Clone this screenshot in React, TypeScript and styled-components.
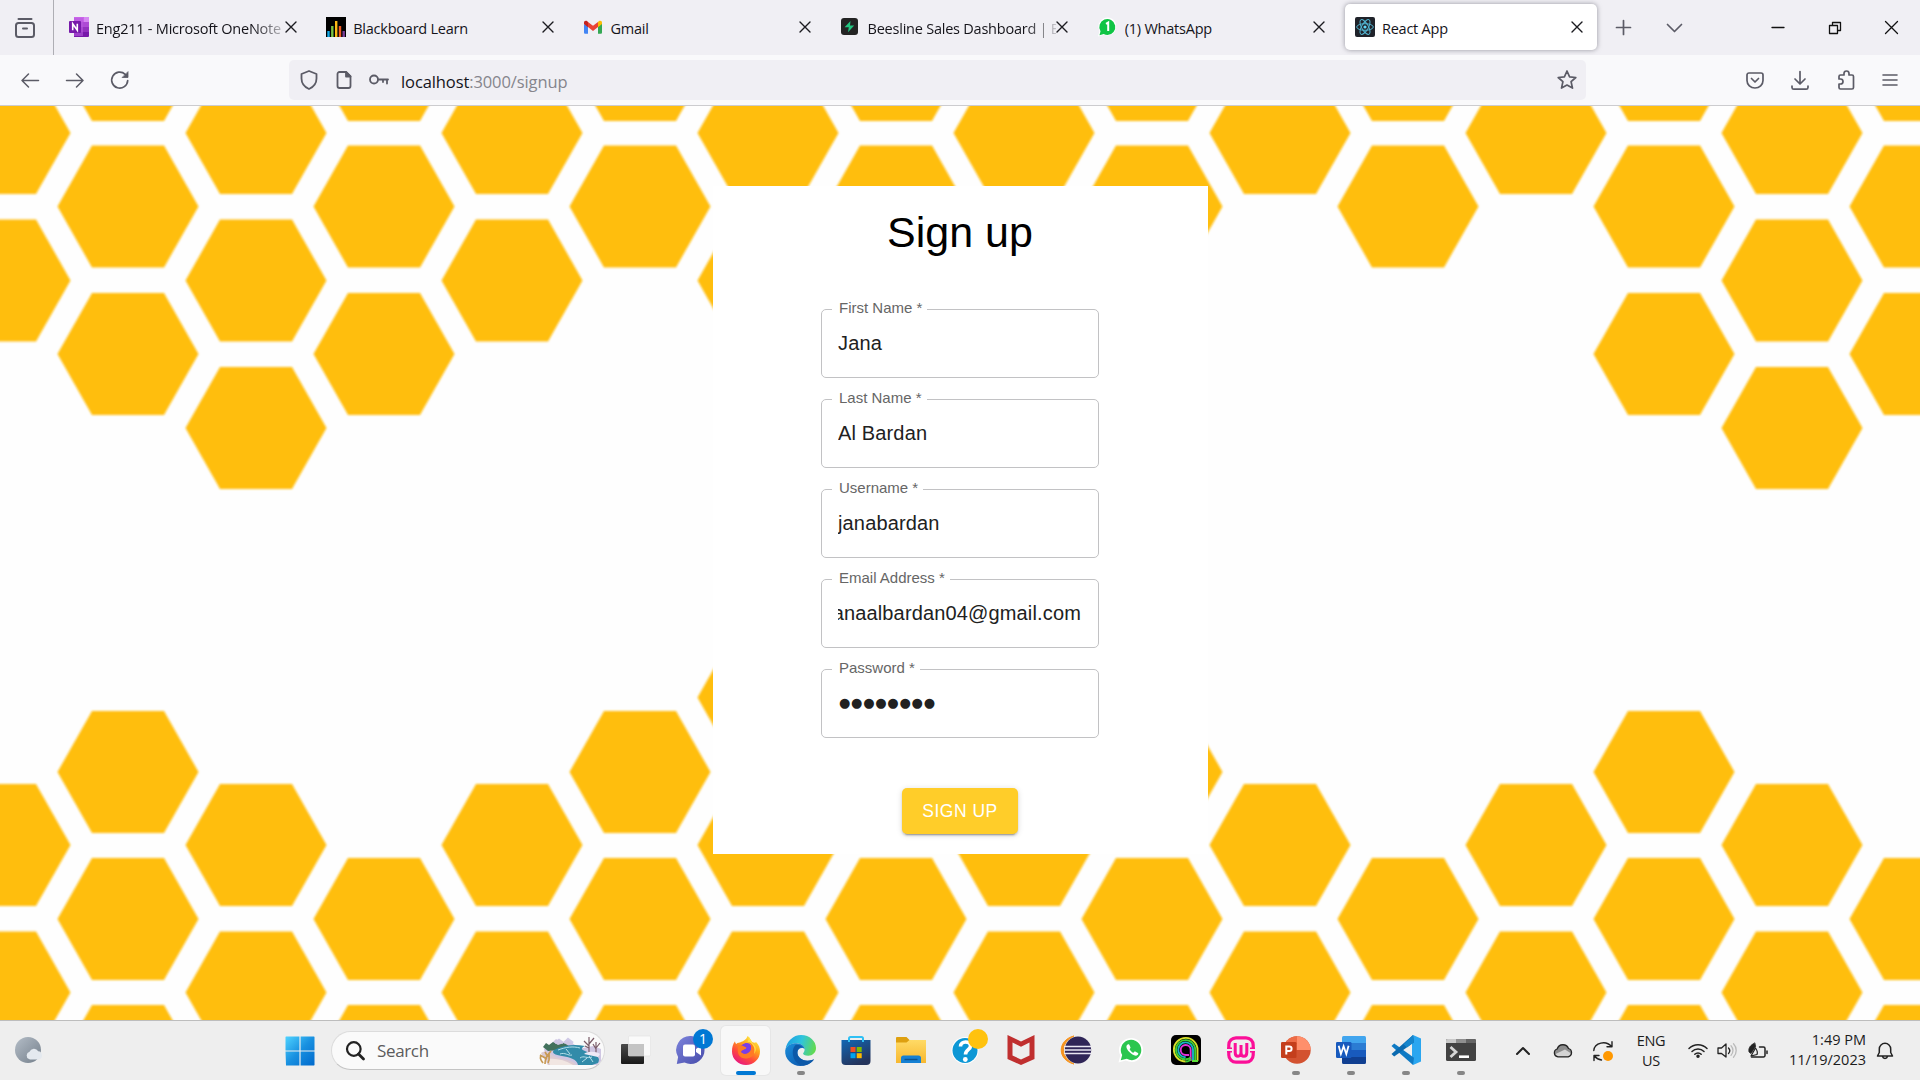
import React from "react";
import styled, { createGlobalStyle } from "styled-components";

const UI_FONT = `"Open Sans", "Noto Sans", sans-serif`;
const FORM_FONT = `"Liberation Sans", Arial, sans-serif`;
const HONEY = "#ffbe10";
const INK = "#5b5b66";

const GlobalStyle = createGlobalStyle`
  *, *::before, *::after { box-sizing: border-box; }
  html, body { margin: 0; padding: 0; background: #fff; overflow: hidden; }
  svg { display: block; flex: none; overflow: visible; }
`;

const Screen = styled.div`
  width: 1920px;
  height: 1080px;
  display: grid;
  grid-template-rows: 55px 50px 1px 914px 60px;
  font-family: ${UI_FONT};
  overflow: hidden;
`;

/* ---------- browser chrome ---------- */

const TabStrip = styled.header`
  display: flex;
  background: #f0eff4;
  min-width: 0;
`;

const TabsOverview = styled.div`
  width: 54px;
  margin-right: 2px;
  padding-right: 4px;
  border-right: 1px solid #aeaeb4;
  display: flex;
  align-items: center;
  justify-content: center;
`;

const TabBox = styled.div<{ $active?: boolean }>`
  width: 251.7px;
  height: 46px;
  margin: 4px 2.5px 0 3px;
  padding: 0 14px 1px 10px;
  border-radius: 5px;
  display: flex;
  align-items: center;
  background: ${(p) => (p.$active ? "#fff" : "transparent")};
  box-shadow: ${(p) => (p.$active ? "0 0 5px rgba(100, 100, 110, 0.65)" : "none")};
`;

const TabTitle = styled.span<{ $fade?: boolean }>`
  flex: 1;
  min-width: 0;
  margin: 4px 0 0 7px;
  overflow: hidden;
  white-space: nowrap;
  font-size: 14.5px;
  line-height: 22px;
  letter-spacing: -0.23px;
  color: #15141a;
  ${(p) => p.$fade && "mask-image: linear-gradient(90deg, #000 83%, transparent 104%);"}
`;

const Cell = styled.div<{ $w: number }>`
  width: ${(p) => p.$w}px;
  flex: none;
  display: flex;
  align-items: center;
  justify-content: center;
`;

const WindowControls = styled.div`
  margin-left: auto;
  display: flex;
`;

const NavBar = styled.nav`
  display: flex;
  align-items: center;
  background: #f9f9fb;
`;

const NavButtons = styled.div`
  display: flex;
  width: 289px;
`;

const AddressBar = styled.div`
  width: 1297px;
  height: 40px;
  border-radius: 5px;
  background: #f0eff4;
  display: flex;
  align-items: center;
  padding-left: 3px;
`;

const Address = styled.span`
  flex: 1;
  margin: 3px 0 0 7px;
  font-size: 16.5px;
  line-height: 24px;
  letter-spacing: -0.1px;
  color: #85858c;
  b { font-weight: 400; color: #15141a; }
`;

const NavTools = styled.div`
  margin-left: auto;
  padding-right: 10px;
  display: flex;
`;

const Divider = styled.div`
  background: #cccccf;
`;

/* ---------- page ---------- */

const Page = styled.main`
  position: relative;
  overflow: hidden;
  background: #fefefe;
  padding: 80px 0 0 713px;
`;

const Backdrop = styled.svg`
  position: absolute;
  inset: 0;
`;

const Card = styled.form`
  position: relative;
  width: 495px;
  height: 668px;
  margin: 0;
  padding-right: 1px;
  background: #fff;
  font-family: ${FORM_FONT};
  display: flex;
  flex-direction: column;
  align-items: center;
`;

const Title = styled.h1`
  margin: 21px 0 43px;
  font-weight: 400;
  font-size: 43px;
  line-height: 50px;
  color: #000;
`;

const Fields = styled.div`
  display: flex;
  flex-direction: column;
  gap: 12px;
`;

const FieldBox = styled.fieldset`
  width: 278px;
  height: 78px;
  margin: 0;
  padding: 0 17px 0 10px;
  border: 1px solid #c2c2c4;
  border-radius: 5px;
  min-width: 0;
`;

const FieldLabel = styled.legend`
  height: 18px;
  padding: 0 5px 0 7px;
  font-size: 15px;
  line-height: 16px;
  color: #666;
  white-space: nowrap;
`;

const FieldValue = styled.div<{ $end?: boolean; $dots?: boolean }>`
  margin: 11px 0 0 ${(p) => (p.$dots ? 7 : 6)}px;
  display: flex;
  justify-content: ${(p) => (p.$end ? "flex-end" : "flex-start")};
  overflow: hidden;
  white-space: nowrap;
  color: #212121;
  font-family: ${(p) => (p.$dots ? `"DejaVu Sans", sans-serif` : FORM_FONT)};
  font-size: ${(p) => (p.$dots ? 13 : 20)}px;
  letter-spacing: ${(p) => (p.$dots ? "0.75px" : "0.15px")};
  line-height: 28px;
`;

const SubmitButton = styled.button`
  margin-top: 50px;
  width: 116px;
  height: 46px;
  padding: 0;
  border: 0;
  border-radius: 5px;
  background: #ffcd29;
  color: #fff;
  font-family: ${FORM_FONT};
  font-size: 17.5px;
  letter-spacing: 0.5px;
  box-shadow: 0 4px 1px -3px rgba(0, 0, 0, 0.2), 0 2px 2px rgba(0, 0, 0, 0.14), 0 1px 6px rgba(0, 0, 0, 0.14);
`;

/* ---------- taskbar ---------- */

const Taskbar = styled.footer`
  display: flex;
  align-items: center;
  background: #eee;
  border-top: 1px solid #bdbdbd;
`;

const SearchBox = styled.div`
  width: 274px;
  height: 39px;
  margin: 0 3px 1px 2px;
  padding: 0 2px 0 14px;
  border-radius: 20px;
  border: 1px solid #dcdcdc;
  border-bottom-color: #c4c4c4;
  background: #fafafa;
  display: flex;
  align-items: center;
  span {
    flex: 1;
    margin-left: 13px;
    font-size: 17px;
    letter-spacing: -0.35px;
    color: #5c5c5c;
  }
`;

const AppSlot = styled.div<{ $state?: "active" | "open" }>`
  position: relative;
  width: 49px;
  height: 49px;
  margin: 0 3px;
  border-radius: 5px;
  display: flex;
  align-items: center;
  justify-content: center;
  background: ${(p) => (p.$state === "active" ? "#f8f8f8" : "transparent")};
  box-shadow: ${(p) => (p.$state === "active" ? "0 0 0 1px #e6e6e6" : "none")};
  > svg { margin-bottom: 1px; }
  &::after {
    content: "";
    position: absolute;
    bottom: 0;
    left: 50%;
    transform: translateX(-50%);
    height: 4px;
    border-radius: 2px;
    width: ${(p) => (p.$state === "active" ? 20 : p.$state === "open" ? 8 : 0)}px;
    background: ${(p) => (p.$state === "active" ? "#0078d4" : "#868686")};
  }
`;

const Badge = styled.span<{ $color: string }>`
  position: absolute;
  top: 3px;
  right: 2px;
  width: 20px;
  height: 20px;
  border-radius: 50%;
  background: ${(p) => p.$color};
  color: #fff;
  font-size: 14px;
  line-height: 20px;
  text-align: center;
`;

const Apps = styled.div`
  display: flex;
`;

const Tray = styled.div`
  margin-left: auto;
  display: flex;
  align-items: center;
`;

const TrayText = styled.div<{ $w: number; $right?: boolean }>`
  width: ${(p) => p.$w}px;
  text-align: ${(p) => (p.$right ? "right" : "center")};
  font-size: 14.5px;
  line-height: 20px;
  letter-spacing: ${(p) => (p.$right ? 0 : -0.3)}px;
  padding-bottom: ${(p) => (p.$right ? 2 : 0)}px;
  color: #1c1c1c;
  white-space: nowrap;
`;

/* ---------- chrome icons ---------- */

const Line = ({ w, h = w, c = INK, s = 2, children }: { w: number; h?: number; c?: string; s?: number; children: React.ReactNode }) => (
  <svg width={w} height={h} viewBox={`0 0 ${w} ${h}`} fill="none" stroke={c} strokeWidth={s} strokeLinecap="round" strokeLinejoin="round">
    {children}
  </svg>
);

const CloseIcon = () => (
  <Line w={12} c="#1b1b20" s={1.4}><path d="M1 1l10 10M11 1L1 11" /></Line>
);

const OneNoteIcon = () => (
  <svg width="20" height="20" viewBox="0 0 20 20">
    <path d="M5 0h14a1 1 0 011 1v4.700H5z" fill="#ca64ea" />
    <path d="M15 0h4a1 1 0 011 1v5h-5z" fill="#d68af2" />
    <path d="M5 5h15v5H5z" fill="#ae4bd5" />
    <path d="M5 10h15v5H5z" fill="#9332bf" />
    <path d="M5 15h15v4a1 1 0 01-1 1H5z" fill="#7719aa" />
    <path d="M5 1h9v18H5z" fill="#b85ade" opacity=".6" />
    <rect x="0" y="4" width="12" height="12" rx="1" fill="#7719aa" />
    <path d="M3.700 13.200V6.800l4.600 6.400V6.800" fill="none" stroke="#fff" strokeWidth="1.600" />
  </svg>
);

const BlackboardIcon = () => (
  <svg width="20" height="20" viewBox="0 0 20 20">
    <rect width="20" height="20" fill="#000" />
    <path d="M2.500 20v-6" stroke="#14a9e8" strokeWidth="2.400" />
    <path d="M6.300 20V9" stroke="#7ac143" strokeWidth="2.400" />
    <path d="M10.200 20V4" stroke="#fdb913" strokeWidth="2.400" />
    <path d="M14 20V9" stroke="#f15a22" strokeWidth="2.400" />
    <path d="M17.700 20v-6" stroke="#7b3f98" strokeWidth="2.400" />
  </svg>
);

const GmailIcon = () => (
  <svg width="20" height="20" viewBox="0 0 20 20">
    <path d="M1 7v8.500A1.200 1.200 0 002.200 16.800H5V9z" fill="#4285f4" />
    <path d="M15 9v7.800h2.800a1.200 1.200 0 001.200-1.300V6z" fill="#34a853" />
    <path d="M5 5l5 3.800L15 5v5l-5 3.900L5 10z" fill="#ea4335" />
    <path d="M15 5l1-.9c1.300-1 3-.2 3 1.400V7l-4 3.200z" fill="#fbbc04" />
    <path d="M5 5l-1-.9C2.700 3.100 1 3.900 1 5.500V7l4 3.200z" fill="#c5221f" />
  </svg>
);

const BeeslineIcon = () => (
  <svg width="20" height="20" viewBox="0 0 20 20">
    <rect x="0" y="1" width="17" height="17" rx="3" fill="#232323" />
    <path d="M9.500 4L3.600 10.300h4.200L7 15.200l6.200-6.600H9z" fill="#22c580" />
  </svg>
);

const WhatsAppTabIcon = () => (
  <svg width="20" height="20" viewBox="0 0 20 20">
    <path d="M0 19.500L1.500 14A9 9 0 1110 18.500a9 9 0 01-4-.8z" fill="#fff" />
    <path d="M1.500 18.200l1-4A8 8 0 119.500 18a8 8 0 01-3.800-1z" fill="#0fc445" />
    <path d="M8 6.800l2.200-1.300v8.500" fill="none" stroke="#fff" strokeWidth="2" />
  </svg>
);

const ReactTabIcon = () => (
  <svg width="20" height="20" viewBox="0 0 20 20">
    <rect width="20" height="20" rx="2" fill="#20232a" />
    <g fill="none" stroke="#52b4d0" strokeWidth="1">
      <ellipse cx="10" cy="10" rx="8.300" ry="3.300" />
      <ellipse cx="10" cy="10" rx="8.300" ry="3.300" transform="rotate(60 10 10)" />
      <ellipse cx="10" cy="10" rx="8.300" ry="3.300" transform="rotate(120 10 10)" />
    </g>
    <circle cx="10" cy="10" r="1.600" fill="#61dafb" />
  </svg>
);

/* ---------- honeycomb ---------- */

// Vertical centres of the cells in each column, relative to the page's top edge.
const TOP = [
  [27, 174.5], [-46, 100.5, 248], [27, 174.5, 322], [-46, 100.5, 248], [27, 174.5], [-46, 100.5], [27, 174.5], [-46, 100.5],
  [27], [-46, 100.5], [27], [-46, 100.5], [27], [-46, 100.5, 248], [27, 174.5, 322], [-46, 100.5, 248],
];
const BOTTOM = [
  [739, 886.5], [666, 813, 960], [739, 886.5], [813, 960], [739, 886.5], [666, 813, 960], [591.5, 739, 886.5], [813, 960],
  [739, 886.5], [666, 813, 960], [739, 886.5], [813, 960], [739, 886.5], [666, 813, 960], [739, 886.5], [813, 960],
];

const Honeycomb = () => (
  <Backdrop width="1920" height="914" viewBox="0 0 1920 914">
    <defs>
      <filter id="soft" x="0" y="0" width="100%" height="100%"><feGaussianBlur stdDeviation="0.9" /></filter>
    </defs>
    <g fill={HONEY} filter="url(#soft)">
      {TOP.map((cells, col) =>
        [...cells, ...BOTTOM[col]].map((y) => (
          <path key={`${col}-${y}`} transform={`translate(${col * 128} ${y})`} d="M-70.500 0L-36-61H36L70.500 0 36 61H-36z" />
        ))
      )}
    </g>
  </Backdrop>
);

/* ---------- taskbar icons ---------- */

const Weather = () => (
  <svg width="28" height="27" viewBox="0 0 28 27">
    <defs><linearGradient id="moon" x1="0" y1="0" x2="1" y2="1"><stop stopColor="#b4bdc7" /><stop offset="1" stopColor="#747f8b" /></linearGradient></defs>
    <circle cx="13" cy="13" r="13" fill="url(#moon)" />
    <path d="M14 22a3.800 3.800 0 01.5-7.200 4.800 4.800 0 018.700-.6 4.200 4.200 0 01.5 8.300H15z" fill="#e4e9ef" />
  </svg>
);

const WindowsLogo = () => (
  <svg width="30" height="30" viewBox="0 0 30 30">
    <defs><linearGradient id="win" x1="0" y1="0" x2="1" y2="1"><stop stopColor="#4fd3ff" /><stop offset=".5" stopColor="#1890e0" /><stop offset="1" stopColor="#0069cc" /></linearGradient></defs>
    <path d="M1 .500H14.400V14.400H.500V1zM15.600 .500H29L29.500 1V14.400H15.600zM.500 15.600H14.400V29.500H1zM15.600 15.600H29.500V29L29 29.500H15.600z" fill="url(#win)" />
  </svg>
);

const River = () => (
  <svg width="64" height="31" viewBox="0 0 64 31">
    <path d="M6 14l8-6 4-4 6 4 6-3 7 5 8 3 10-2 8 3v12l-4 4H10z" fill="#cfc6e2" />
    <path d="M5 12l3-4 3 2 4-3 5 3 6-2 5 3 5 0-6 3-20 2z" fill="#42715c" />
    <path d="M17 8l4-3 4 3M26 8l4-4 5 4" stroke="#cfc9e6" strokeWidth="2.400" fill="none" />
    <path d="M16 15c10-5 20-6 31-4-6 3-3 4 5 7 7 2 11 5 8 10l-6 2H40c-1-6-9-8-16-9-7-1-11-3-8-6z" fill="#328ba9" />
    <path d="M20 15c8-3 15-4 22-2M22 19c5-2 8 2 12 1M42 23c4-3 7 1 12-1M28 14l4 5M44 27l5-4M51 21l4 6" stroke="#b5e0ea" strokeWidth="1" fill="none" />
    <path d="M3 18c7-4 8 1 15 4s18 3 20 8H10z" fill="#dccbd2" />
    <path d="M10 24c8-1 17 1 25 6H12z" fill="#f1e6e2" />
    <path d="M5 28c-3-4-3-5-2-8M7 29c0-6 2-8 6-13M10 28c2-4 1-6 1-9M2 20l7 4M7 17l3 5" stroke="#c89a54" strokeWidth="1.700" fill="none" />
    <path d="M51 19V2M51 11l-5-5M51 9l5-6M51 13l-4-2M58 20V7M58 14l-3-5M58 13l4-5" stroke="#795b68" strokeWidth="1.200" fill="none" />
    <path d="M46 19c3-3 12-3 16 0l-2 3z" fill="#efe9f6" />
  </svg>
);

const TaskView = () => (
  <svg width="30" height="30" viewBox="0 0 30 30">
    <defs><linearGradient id="tv" x1="0" y1="0" x2="0" y2="1"><stop stopColor="#4a4a4a" /><stop offset="1" stopColor="#191919" /></linearGradient></defs>
    <rect x="0" y="9" width="23" height="20" rx="1" fill="url(#tv)" />
    <rect x="7.500" y="1" width="22" height="20" rx="1" fill="#fafafa" stroke="#e0e0e0" strokeWidth=".6" />
    <rect x="7.500" y="9" width="15.500" height="12" fill="#c4c4c4" />
  </svg>
);

const Chat = () => (
  <svg width="30" height="30" viewBox="0 0 30 30">
    <defs><linearGradient id="chat" x1="0" y1="0" x2="1" y2="1"><stop stopColor="#7c83dc" /><stop offset="1" stopColor="#474caa" /></linearGradient></defs>
    <path d="M15 1a14 14 0 11-6.500 26.600L.800 29l1.300-7A14 14 0 0115 1z" fill="url(#chat)" />
    <rect x="7" y="9.500" width="12" height="12" rx="2" fill="#fff" />
    <path d="M20 14l5-3.500v10L20 17z" fill="#fff" />
  </svg>
);

const Firefox = () => (
  <svg width="30" height="30" viewBox="0 0 30 30">
    <defs>
      <linearGradient id="ff" x1=".8" y1="0" x2=".2" y2="1"><stop stopColor="#fff44f" /><stop offset=".35" stopColor="#ffa51b" /><stop offset=".65" stopColor="#ff4b3b" /><stop offset="1" stopColor="#e4108b" /></linearGradient>
    </defs>
    <path d="M16.500 1c3 2 3.200 4.500 4.800 6.200 2 .300 3 1 3.700-.200C28 10 29 13 29 16.500A14 13.500 0 011 16.500c0-4 .8-7.300 3-10.200.2 1.500.6 2 1.300 2.600C7 7.500 8.500 8 9.500 7.300c2.400-1.200 5.500-2 7-6.300z" fill="url(#ff)" />
    <circle cx="15" cy="15.500" r="7" fill="#7a3ee6" />
    <path d="M7.500 10c3-.500 5.500 1.500 8 2.500-.5 2.500-4.500 2-5.500 4.500 3 3.500 9 1.500 10-3.500.5-3-.7-5.500-3-7 5-.3 8 4 7 9.500-1 5-5 7.500-9.500 7.500C9 23.500 5 19 7.500 10z" fill="#ff7a24" />
    <path d="M10.500 16.500c2 3.200 7.500 2.500 9-1.500.8-2.200.5-4.500-1-6.500-2.500-1-5-.5-6.500 1 2 1 3 2 4 3-.5 2.500-4.500 2-5.500 4z" fill="#7a3ee6" />
    <path d="M17 1.500c2.800 2 2.500 4.500 5.500 7.500 3 3 3 7 .500 10 2-7-2-11-6.500-12.500 1.500-1.500 1.500-3 .500-5z" fill="#ffe145" />
  </svg>
);

const Edge = () => (
  <svg width="31" height="31" viewBox="0 0 30 30">
    <defs>
      <linearGradient id="ed1" x1="0" y1=".3" x2="1" y2=".5"><stop stopColor="#1b9de2" /><stop offset=".5" stopColor="#2fc4dd" /><stop offset="1" stopColor="#62da4f" /></linearGradient>
      <linearGradient id="ed2" x1="0" y1="0" x2="1" y2="1"><stop stopColor="#1b8fdc" /><stop offset="1" stopColor="#0b4ea5" /></linearGradient>
    </defs>
    <path d="M.500 14C1.500 6 8 0 15.500 0 24 0 30 6 30 12.500c0 4.500-3.500 7.500-7.500 7.500-3.500 0-5-1-5-2 0-.8 1.500-1.500 1.500-4C19 10.500 15 8 11 8 6 8 2 10.500.500 14z" fill="url(#ed1)" />
    <path d="M.200 15C1 10.500 6 8 11 8c5 0 8 3 8 6-1.500-2.500-6.500-1.500-7 2.500-.500 5 5 8.500 9.500 8.500 3 0 5-.8 6.500-1.500C25.500 27.500 20.500 30 15 30 6.500 30-.500 23 .200 15z" fill="url(#ed2)" />
    <path d="M10.500 9.500C5 14 7 28 17.500 29.700 22 29 26.500 26.500 28 23.500c-8 3.500-16.500 0-16-7 .3-3.500 3-5 5-4.500-1.500-2-4-3-6.500-2.500z" fill="#0d59a8" />
  </svg>
);

const Store = () => (
  <svg width="30" height="30" viewBox="0 0 30 30">
    <defs><linearGradient id="st" x1="0" y1="0" x2=".5" y2="1"><stop stopColor="#1267b4" /><stop offset="1" stopColor="#24345c" /></linearGradient></defs>
    <path d="M.500 5h29v21a4 4 0 01-4 4h-21a4 4 0 01-4-4z" fill="url(#st)" />
    <path d="M8 7V3.500A1.500 1.500 0 019.500 2h11A1.500 1.500 0 0122 3.500V7" fill="none" stroke="#2fc0f4" strokeWidth="2" />
    <rect x="9.500" y="12" width="5" height="5" fill="#f25022" /><rect x="15.700" y="12" width="5" height="5" fill="#7fba00" />
    <rect x="9.500" y="18.200" width="5" height="5" fill="#00a4ef" /><rect x="15.700" y="18.200" width="5" height="5" fill="#ffb900" />
  </svg>
);

const Folder = () => (
  <svg width="30" height="28" viewBox="0 0 30 28">
    <defs><linearGradient id="fo" x1="0" y1="0" x2="0" y2="1"><stop stopColor="#ffda66" /><stop offset="1" stopColor="#f7b82f" /></linearGradient></defs>
    <path d="M0 2a1 1 0 011-1h9.500l3 3H29a1 1 0 011 1v6H0z" fill="#dea010" />
    <path d="M0 6.500h10.500l3-2.500H30v23H0z" fill="url(#fo)" />
    <path d="M5 27v-5a2.500 2.500 0 012.500-2.500h15A2.500 2.500 0 0125 22v5z" fill="#1580d3" />
    <path d="M8.500 23.500h13" stroke="#0b5390" strokeWidth="1.400" />
  </svg>
);

const Help = () => (
  <svg width="30" height="30" viewBox="0 0 30 30">
    <circle cx="14" cy="15.500" r="13.500" fill="#fff" /><circle cx="14" cy="15.500" r="12.500" fill="#0c97d5" />
    <path d="M9.500 11.500c0-6 10-6 10-.5 0 4-5 3.500-5 8.500" fill="none" stroke="#fff" strokeWidth="3.600" />
    <circle cx="14.300" cy="24.500" r="2.400" fill="#fff" />
  </svg>
);

const McAfee = () => (
  <svg width="28" height="30" viewBox="0 0 28 30">
    <path d="M.500 0L14 6.500 27.500 0v24L14 30 .500 24zM5.500 7.500v13L14 24.500l8.500-4v-13L14 11.700z" fill="#c02f2f" fillRule="evenodd" />
  </svg>
);

const Eclipse = () => (
  <svg width="30" height="28" viewBox="0 0 30 28">
    <path d="M13 0C-4 4-4 24 13 28-1 21-1 7 13 0z" fill="#f7941e" stroke="#f7941e" />
    <ellipse cx="17" cy="14" rx="13.200" ry="13.500" fill="#2f2557" />
    <path d="M3 10.500h27M3 14h27M3 17.500h27" stroke="#e9e6f2" strokeWidth="1.700" />
  </svg>
);

const WhatsApp = () => (
  <svg width="26" height="26" viewBox="0 0 28 28">
    <path d="M.500 27.500l2-7.500A13 13 0 1115 27a13 13 0 01-6.500-1.600z" fill="#fff" />
    <path d="M3 25l1.500-5.500A11 11 0 1115 25a11 11 0 01-5.500-1.500z" fill="#2bc64f" />
    <path d="M10.500 8c-2.500 1.500-1.500 4.500 1.500 8s7 5 9 3.500c1-1 1-2 .5-2.300L18.500 15.500c-.7-.3-1.500 1.600-2.200 1.400-1.500-.6-3-2-3.800-3.700-.2-.6 1.200-1.200 1-2L12.200 8.400c-.4-.7-1.200-.6-1.700-.4z" fill="#fff" />
  </svg>
);

const SpiralA = () => (
  <svg width="30" height="30" viewBox="0 0 30 30">
    <rect width="30" height="30" rx="5" fill="#000" />
    <g fill="none" strokeWidth="1.900">
      <path d="M26.500 26V15A11.800 11.800 0 1014.700 26.500" stroke="#d6e02b" />
      <path d="M24.200 26V15A9.600 9.600 0 1014.700 24.300" stroke="#3ecf35" />
      <path d="M22 26V15a7.400 7.400 0 10-7.300 7.200" stroke="#17b6c4" />
      <path d="M19.700 26V15a5 5 0 10-5 5H18" stroke="#e132d9" />
      <path d="M14.700 26.500c2.500 0 4.500-1 5-2.500M14.700 24.300c2 0 3.500-.5 5-2" stroke="#3ecf35" />
    </g>
    <path d="M21 26h6" stroke="#5de03b" strokeWidth="2" />
  </svg>
);

const Wamp = () => (
  <svg width="28" height="28" viewBox="0 0 28 28" fill="none" stroke="#fb0f98">
    <path d="M1.800 12V9A7.200 7.200 0 019 1.800h10A7.200 7.200 0 0126.200 9v3M26.200 16v3a7.200 7.200 0 01-7.200 7.200H9A7.200 7.200 0 011.800 19v-3" strokeWidth="3.200" />
    <path d="M0 12.300h5M23 12.300h5M0 15.700h5M23 15.700h5" strokeWidth="1.500" />
    <path d="M8.200 7v9.500c0 5 5.800 5 5.800 0V9v7.500c0 5 5.800 5 5.800 0V7" strokeWidth="3" />
  </svg>
);

const PowerPoint = () => (
  <svg width="30" height="28" viewBox="0 0 30 28">
    <circle cx="16" cy="14" r="13.700" fill="#d35230" />
    <path d="M16 .300A13.700 13.700 0 002.300 14H16z" fill="#ed6c47" /><path d="M16 .300A13.700 13.700 0 0129.700 14H16z" fill="#ff8f6b" />
    <rect x="0" y="6" width="15.500" height="16" rx="1.300" fill="#c43e1c" />
    <path d="M5.300 18.500v-8h3a2.300 2.300 0 010 4.600h-3" fill="none" stroke="#fff" strokeWidth="2" />
  </svg>
);

const Word = () => (
  <svg width="30" height="28" viewBox="0 0 30 28">
    <path d="M6 1.500A1.500 1.500 0 017.500 0h21A1.500 1.500 0 0130 1.500V7H6z" fill="#41a5ee" /><path d="M6 7h24v7H6z" fill="#2b7cd3" />
    <path d="M6 14h24v7H6z" fill="#185abd" /><path d="M6 21h24v5.500a1.500 1.500 0 01-1.500 1.500h-21A1.500 1.500 0 016 26.500z" fill="#103f91" />
    <rect x="0" y="6" width="15.500" height="16" rx="1.300" fill="#185abd" />
    <path d="M2.700 9.800l2.200 8.200 2.700-7.700 2.700 7.700 2.300-8.200" fill="none" stroke="#fff" strokeWidth="1.800" />
  </svg>
);

const VsCode = () => (
  <svg width="30" height="30" viewBox="0 0 30 30">
    <path d="M22 0l8 3.500v23L22 30 21 22.500V7.500z" fill="#2aa6f0" />
    <path d="M22 30L.500 11l2.700-2.500L23 22.800z" fill="#0f7ac4" />
    <path d="M22 0L.500 19l2.700 2.500L23 7.200z" fill="#0a6ab0" />
    <path d="M22 0l1 7.300-7 5.200-3.500-3.300z" fill="#1585cc" />
  </svg>
);

const Terminal = () => (
  <svg width="30" height="22" viewBox="0 0 30 22">
    <rect width="30" height="22" rx="1.500" fill="#424242" />
    <path d="M0 4V1.500A1.500 1.500 0 011.500 0H10v4z" fill="#c9c9c9" /><path d="M10 0h10v4H10z" fill="#8f8f8f" /><path d="M20 0h8.500A1.500 1.500 0 0130 1.500V4H20z" fill="#646464" />
    <path d="M4.500 8l5.500 5-5.500 5" fill="none" stroke="#d6d6d6" strokeWidth="2.800" /><path d="M13 17.700h10" stroke="#fff" strokeWidth="2.600" />
  </svg>
);

const TABS = [
  { title: "Eng211 - Microsoft OneNote", icon: <OneNoteIcon />, fade: true },
  { title: "Blackboard Learn", icon: <BlackboardIcon /> },
  { title: "Gmail", icon: <GmailIcon /> },
  { title: "Beesline Sales Dashboard | E", icon: <BeeslineIcon />, fade: true },
  { title: "(1) WhatsApp", icon: <WhatsAppTabIcon /> },
  { title: "React App", icon: <ReactTabIcon />, active: true },
];

const FIELDS = [
  { label: "First Name *", value: "Jana" },
  { label: "Last Name *", value: "Al Bardan" },
  { label: "Username *", value: "janabardan" },
  { label: "Email Address *", value: "janaalbardan04@gmail.com", end: true },
  { label: "Password *", value: "●●●●●●●●", dots: true },
];

const APPS: { name: string; icon: React.ReactNode; state?: "active" | "open"; badge?: string; color?: string }[] = [
  { name: "tasks", icon: <TaskView /> },
  { name: "chat", icon: <Chat />, badge: "1", color: "#0078d4" },
  { name: "firefox", icon: <Firefox />, state: "active" },
  { name: "edge", icon: <Edge />, state: "open" },
  { name: "store", icon: <Store /> },
  { name: "files", icon: <Folder /> },
  { name: "help", icon: <Help />, badge: "", color: "#ffc20e" },
  { name: "mcafee", icon: <McAfee /> },
  { name: "eclipse", icon: <Eclipse /> },
  { name: "whatsapp", icon: <WhatsApp /> },
  { name: "spiral", icon: <SpiralA /> },
  { name: "wamp", icon: <Wamp /> },
  { name: "powerpoint", icon: <PowerPoint />, state: "open" },
  { name: "word", icon: <Word />, state: "open" },
  { name: "vscode", icon: <VsCode />, state: "open" },
  { name: "terminal", icon: <Terminal />, state: "open" },
];

export default function App() {
  return (
    <Screen>
      <GlobalStyle />
      <TabStrip>
        <TabsOverview>
          <Line w={20}><path d="M3.500 1h13" /><rect x="1" y="5" width="18" height="14" rx="2.500" /><path d="M8 10.500h4" /></Line>
        </TabsOverview>
        {TABS.map((tab) => (
          <TabBox key={tab.title} $active={tab.active}>
            {tab.icon}
            <TabTitle $fade={tab.fade}>{tab.title}</TabTitle>
            <CloseIcon />
          </TabBox>
        ))}
        <Cell $w={49}><Line w={15} s={1.7}><path d="M7.500 .500v14M.500 7.500h14" /></Line></Cell>
        <Cell $w={52}><Line w={15} h={8} s={1.7}><path d="M.500 .500l7 7 7-7" /></Line></Cell>
        <WindowControls>
          <Cell $w={57}><Line w={12} h={2} c="#111" s={1.3}><path d="M0 .500h12" /></Line></Cell>
          <Cell $w={57}><Line w={12} c="#111" s={1.3}><path d="M.500 3.500h8v8h-8zM3.500 3V.500h8v8H9" /></Line></Cell>
          <Cell $w={57}><Line w={13} c="#111" s={1.3}><path d="M.500 .500l12 12M12.500 .500l-12 12" /></Line></Cell>
        </WindowControls>
      </TabStrip>

      <NavBar>
        <NavButtons>
          <Cell $w={60}><Line w={18} h={15} s={1.5}><path d="M17.500 7.500H1M7.500 1L1 7.500 7.500 14" /></Line></Cell>
          <Cell $w={30}><Line w={18} h={15} s={1.5}><path d="M.500 7.500H17M10.500 1L17 7.500 10.500 14" /></Line></Cell>
          <Cell $w={60}>
            <Line w={18} s={1.7}><path d="M16.700 9.500a8 8 0 11-2.500-6.200L16 5" /><path d="M17 1v5.500h-5.500z" fill={INK} strokeWidth=".8" /></Line>
          </Cell>
        </NavButtons>
        <AddressBar>
          <Cell $w={34}><Line w={18} h={20} s={1.8}><path d="M9 1l7.500 3v4.500c0 5-3 8.500-7.500 10.500C4.500 17 1.500 13.500 1.500 8.500V4z" /></Line></Cell>
          <Cell $w={36}><Line w={16} h={18} s={1.8}><path d="M10 1H3.500a2 2 0 00-2 2v12a2 2 0 002 2h9a2 2 0 002-2V5.500z" /><path d="M10 1v4.500h4.500z" fill={INK} /></Line></Cell>
          <Cell $w={34}><Line w={20} h={12} s={1.8}><circle cx="5" cy="5.500" r="4" /><path d="M9.500 5.500H19M14 5.500v2.500M18 5.500v4" /></Line></Cell>
          <Address style={{ marginLeft: 5 }}><b>localhost</b>:3000/signup</Address>
          <Cell $w={38}><Line w={20} s={1.7}><path d="M10 1l2.600 5.800 6.200.7-4.700 4.200 1.400 6.400L10 15l-5.500 3.100 1.400-6.400L1.200 7.500l6.200-.7z" /></Line></Cell>
        </AddressBar>
        <NavTools>
          <Cell $w={44}><Line w={18} h={17} s={1.7}><path d="M3 1h12a2 2 0 012 2v5.500a8 7.500 0 01-16 0V3a2 2 0 012-2z" /><path d="M5.500 6.500L9 10l3.500-3.500" /></Line></Cell>
          <Cell $w={45}><Line w={18} h={19} s={1.7}><path d="M9 .500v12M4 8l5 5 5-5M1 15v1.500A1.800 1.800 0 002.800 18.200h12.400A1.800 1.800 0 0017 16.500V15" /></Line></Cell>
          <Cell $w={48}><Line w={18} h={20} s={1.7}><path d="M2 8V6.500A1.500 1.500 0 013.500 5H7V3.500a2.500 2.500 0 015 0V5h3A1.500 1.500 0 0116.500 6.500v11A1.500 1.500 0 0115 19H3.500A1.500 1.500 0 012 17.500V14h1.500a2.400 2.400 0 000-5H2z" /></Line></Cell>
          <Cell $w={40}><Line w={16} h={13} s={1.6}><path d="M1 1h14M1 6h14M1 11h14" /></Line></Cell>
        </NavTools>
      </NavBar>
      <Divider />

      <Page>
        <Honeycomb />
        <Card>
          <Title>Sign up</Title>
          <Fields>
            {FIELDS.map((f) => (
              <FieldBox key={f.label}>
                <FieldLabel>{f.label}</FieldLabel>
                <FieldValue $end={f.end} $dots={f.dots}>{f.value}</FieldValue>
              </FieldBox>
            ))}
          </Fields>
          <SubmitButton type="button">SIGN UP</SubmitButton>
        </Card>
      </Page>

      <Taskbar>
        <Cell $w={58}><Weather /></Cell>
        <Cell $w={213} />
        <Cell $w={58}><WindowsLogo /></Cell>
        <SearchBox>
          <Line w={18} h={19} c="#222" s={2.2}><circle cx="7.800" cy="8" r="6.800" /><path d="M12.500 13l5 5" strokeWidth="2.800" /></Line>
          <span>Search</span>
          <River />
        </SearchBox>
        <Apps>
          {APPS.map((app) => (
            <AppSlot key={app.name} $state={app.state}>
              {app.icon}
              {app.color && <Badge $color={app.color}>{app.badge}</Badge>}
            </AppSlot>
          ))}
        </Apps>
        <Tray>
          <Cell $w={40}><Line w={14} h={8} c="#222"><path d="M1 7l6-6 6 6" /></Line></Cell>
          <Cell $w={40}>
            <svg width="20" height="15" viewBox="0 0 20 15">
              <path d="M5 13.800a4 4 0 01-.8-7.800 6 6 0 0111.300-.5 4.300 4.300 0 01-.3 8.300z" fill="#8d8d8d" />
              <path d="M1.500 11.500L12 6.500l7 4.500-2.500 2.500H4z" fill="#d4d4d4" />
              <path d="M5 13.800a4 4 0 01-.8-7.800 6 6 0 0111.300-.5 4.300 4.300 0 01-.3 8.300z" fill="none" stroke="#252525" strokeWidth="1.300" />
            </svg>
          </Cell>
          <Cell $w={40}>
            <Line w={20} c="#222" s={1.4}>
              <path d="M.800 9.500C1.500 1.500 13 -1 18.500 5.500M19 .800v5h-5M1 14.500v5M1 14.500h5M1.500 15c2 2.500 4.500 3.700 7 4" />
              <circle cx="15" cy="15" r="5" fill="#ff9800" stroke="none" />
            </Line>
          </Cell>
          <TrayText $w={56}>ENG<br />US</TrayText>
          <Cell $w={37}>
            <Line w={20} h={15} c="#222" s={1.5}><path d="M1 5.500a12.700 12.700 0 0118 0M4 8.500a8.500 8.500 0 0112 0M6.800 11.300a4.500 4.500 0 016.400 0" /><circle cx="10" cy="13.300" r="1" fill="#222" /></Line>
          </Cell>
          <Cell $w={22}>
            <Line w={20} h={15} c="#222" s={1.3}><path d="M1 5h3.500L9 1v13L4.500 10.500H1zM11.500 5a4 4 0 010 5.500" /><path d="M14 2.700a7 7 0 010 9.700M16.500 .800a9.800 9.800 0 010 13.500" stroke="#bababa" /></Line>
          </Cell>
          <Cell $w={40}>
            <Line w={20} h={16} c="#222" s={1.5}>
              <path d="M11.500 4H15.500A1.500 1.500 0 0117 5.500v7a1.500 1.500 0 01-1.500 1.500H3.500M19 8v2.500" />
              <path d="M6.500 0C3 2 0 4.500 1 9l2 1.500L7.500 3.500z" fill="#222" strokeWidth=".8" />
              <path d="M7.500 5L3 13l6-1.500c1-2.500 0-4.500-1.500-6.500z" strokeWidth="1.200" />
            </Line>
          </Cell>
          <TrayText $w={88} $right>1:49 PM<br />11/19/2023</TrayText>
          <Cell $w={38}><Line w={18} h={18} c="#222" s={1.5}><path d="M1.500 14h15l-1.800-3.500V7a5.700 5.700 0 00-11.400 0v3.500zM6.500 14.500a2.600 2.600 0 005 0" /></Line></Cell>
          <Cell $w={16} />
        </Tray>
      </Taskbar>
    </Screen>
  );
}
